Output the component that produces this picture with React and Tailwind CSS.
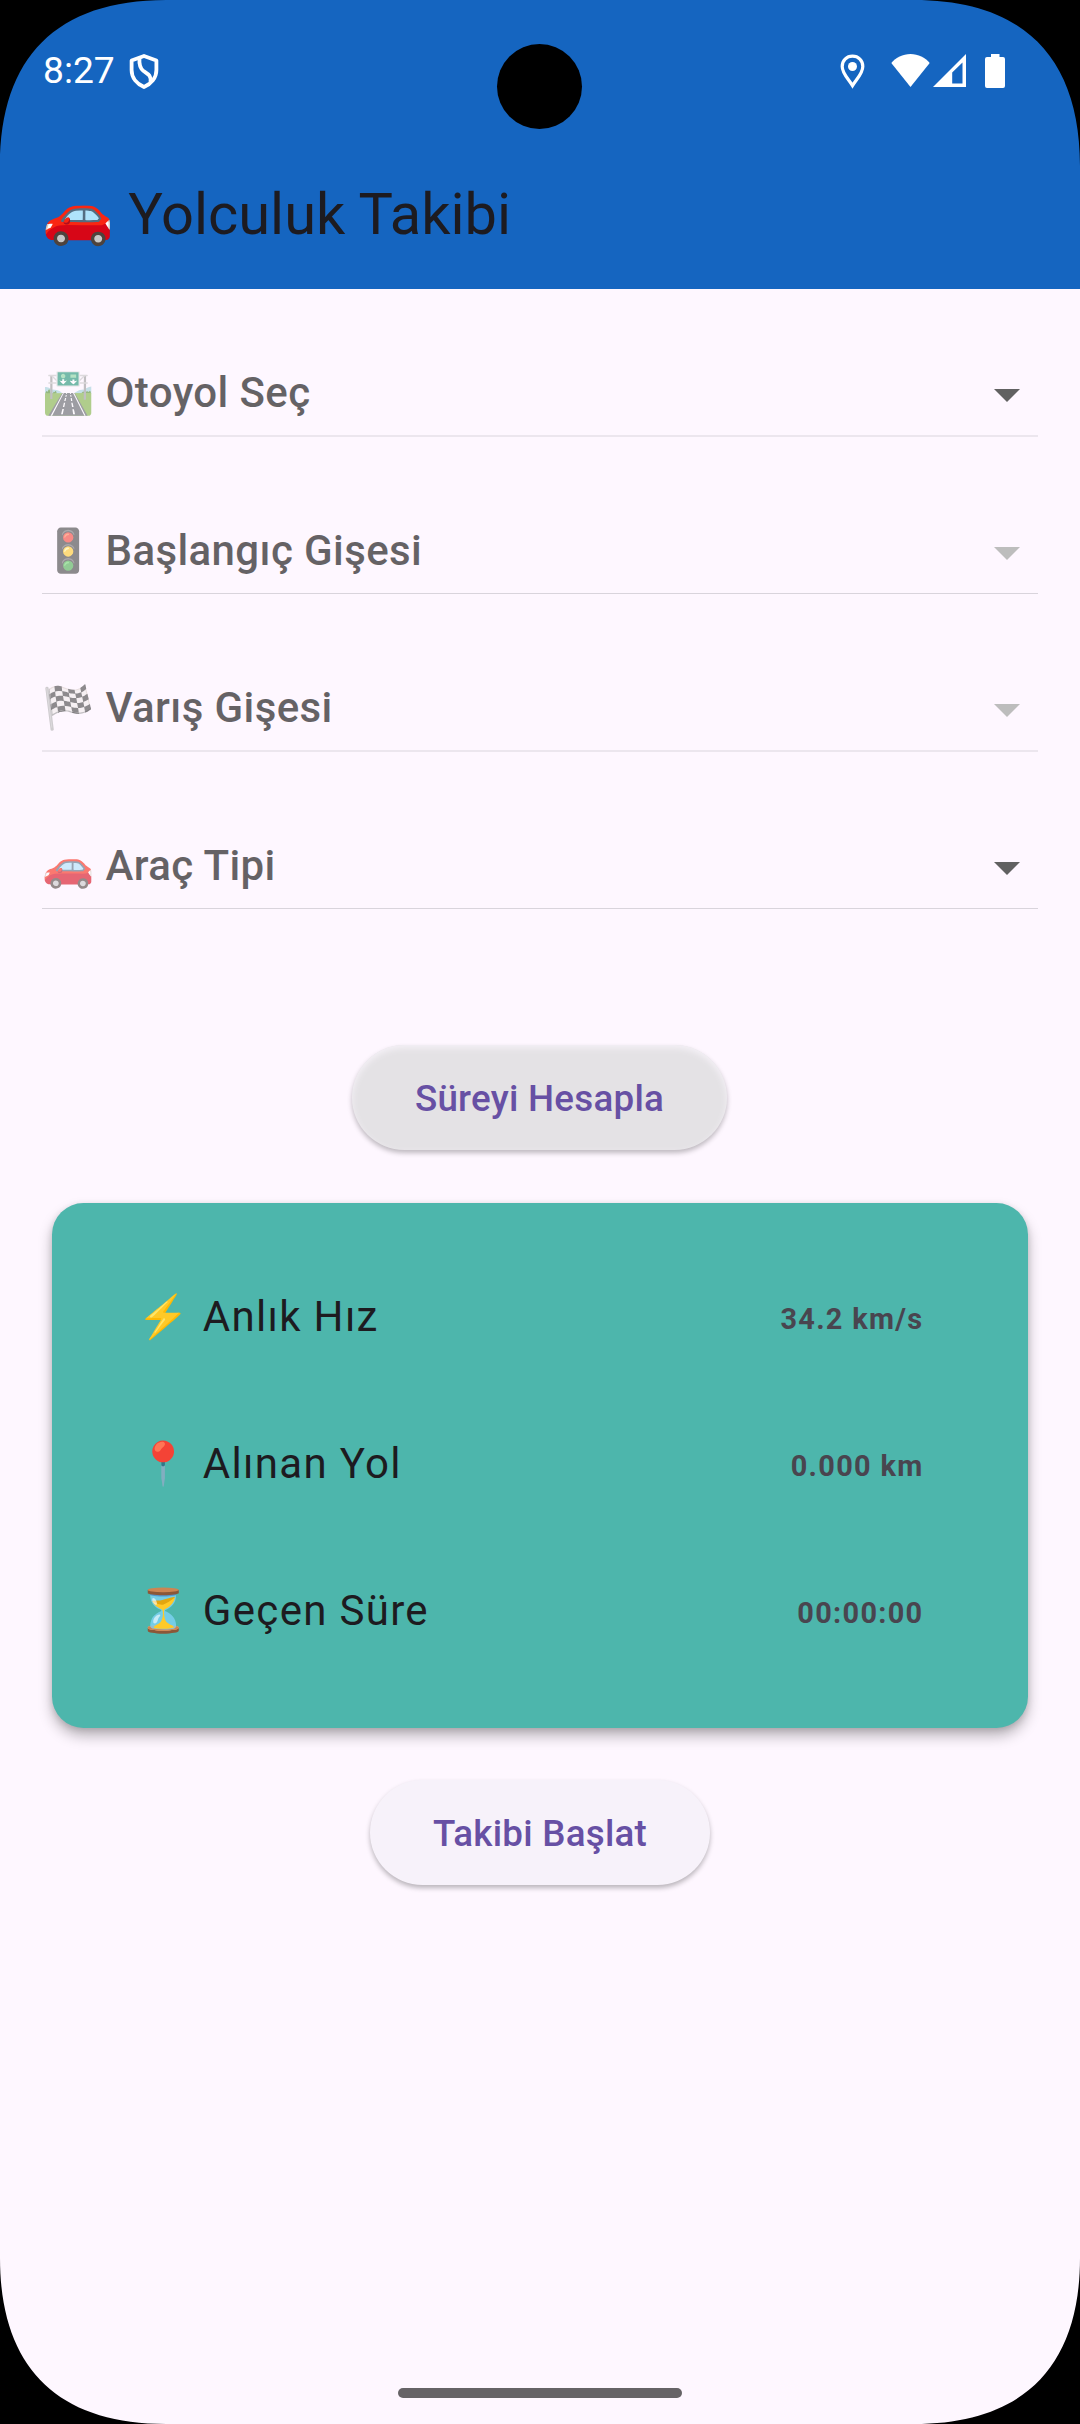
const selects = [
  { icon: "🛣️", label: "Otoyol Seç", enabled: true, line: "-mt-px h-[2px] bg-[#ece6ee]" },
  { icon: "🚦", label: "Başlangıç Gişesi", enabled: false, line: "h-px bg-[#d9d4dc]" },
  { icon: "🏁", label: "Varış Gişesi", enabled: false, line: "-mt-px h-[2px] bg-[#ece6ee]" },
  { icon: "🚗", label: "Araç Tipi", enabled: true, line: "h-px bg-[#d9d4dc]" },
];

const stats = [
  { icon: "⚡", label: "Anlık Hız", value: "34.2 km/s" },
  { icon: "📍", label: "Alınan Yol", value: "0.000 km" },
  { icon: "⏳", label: "Geçen Süre", value: "00:00:00" },
];

function Corner({ className }) {
  return (
    <svg className={`absolute h-[166px] w-[166px] ${className}`} viewBox="0 0 166 166">
      <path d="M0 0V166C0 57 57 0 166 0Z" fill="#000" />
    </svg>
  );
}

function StatusBar() {
  return (
    <div className="flex h-[142px] items-start text-white">
      <span className="ml-[43px] mt-[49px] w-[86px] text-[37.2px] leading-[43px]">8:27</span>
      <svg className="mt-[54px] h-[35px] w-[30px]" viewBox="0 0 30 35" fill="none" stroke="#fff" strokeLinejoin="round">
        <path d="M15 2 27.400 6.500V16C27.400 24 22 30 15 33 8 30 2.600 24 2.600 16V6.500Z" strokeWidth="3.8" />
        <path d="M10.500 4C10 10 10.500 14 14.500 17 19 20 22.500 21.500 21.500 28" strokeWidth="3.8" />
      </svg>
      <svg className="ml-[681px] mt-[54px] h-[35px] w-[25px]" viewBox="0 0 25 35">
        <path d="M12.500 2.200C6.500 2.200 2.200 6.600 2.200 12.400 2.200 19.400 8.500 25 12.500 31.600 16.500 25 22.800 19.400 22.800 12.400 22.800 6.600 18.500 2.200 12.500 2.200Z" fill="none" stroke="#fff" strokeWidth="3.2" />
        <circle cx="12.500" cy="12.500" r="4.500" fill="#fff" />
      </svg>
      <svg className="ml-[26px] mt-[54px] h-[33px] w-[39px]" viewBox="0 0 40 33" preserveAspectRatio="none" fill="#fff">
        <path d="M20 33 .3 9C5 3.500 12 0 20 0s15 3.500 19.700 9Z" />
      </svg>
      <svg className="ml-[3px] mt-[54px] h-[33px] w-[33px]" viewBox="0 0 33 33" fill="#fff">
        <path fillRule="evenodd" d="M33 0V33H0ZM29.500 8.500 19.200 18.500V29.500H29.500Z" />
      </svg>
      <svg className="ml-[19px] mt-[54px] h-[34px] w-[20px]" viewBox="0 0 20 34" fill="#fff">
        <path d="M6 0h8.500V3H18a2 2 0 0 1 2 2V32a2 2 0 0 1-2 2H2a2 2 0 0 1-2-2V5A2 2 0 0 1 2 3H6Z" />
      </svg>
    </div>
  );
}

function SelectRow({ icon, label, enabled, line }) {
  return (
    <div className="flex h-[157.5px] flex-col justify-end">
      <div className="flex h-[83px] items-center justify-between">
        <span className="whitespace-pre pb-[3px] text-[42px] font-medium leading-[63px] tracking-[0.39px] text-black opacity-60">
          {icon} {label}
        </span>
        <svg className={`mr-[18px] mt-[3px] h-[13px] w-[26px] ${enabled ? "text-[#616161]" : "text-[#bdbdbd]"}`} viewBox="0 0 26 13" fill="currentColor">
          <path d="M0 0H26L13 13Z" />
        </svg>
      </div>
      <div className={line} />
    </div>
  );
}

export default function App() {
  return (
    <div className="relative flex h-[2424px] w-[1080px] flex-col overflow-hidden bg-[#fef7ff] font-[Roboto,'Noto_Color_Emoji',sans-serif]">
      <header className="h-[289px] bg-[#1565c0]">
        <StatusBar />
        <h1 className="ml-[42px] whitespace-pre text-[57.75px] leading-[145px] text-[#1d1b20]">🚗 Yolculuk Takibi</h1>
      </header>

      <main className="flex flex-col items-center">
        <div className="-mt-[10px] w-[996px]">
          {selects.map((s) => (
            <SelectRow key={s.label} {...s} />
          ))}
        </div>

        <button className="mt-[136px] mr-px h-[105px] w-[375px] rounded-full bg-[#e4e2e5] pt-[2px] text-[36.75px] font-medium tracking-[0.26px] text-[#6750a4] shadow-[0_3px_5px_rgba(0,0,0,0.25),inset_0_3px_6px_#f5f1f7]">
          Süreyi Hesapla
        </button>

        <section className="mt-[52.5px] h-[525px] w-[976px] rounded-[31.5px] bg-[#4db6ac] pt-[42px] pl-[85.5px] pr-[104.5px] shadow-[0_8px_14px_rgba(0,0,0,0.27),0_2px_6px_rgba(0,0,0,0.12)]">
          {stats.map((s) => (
            <div key={s.label} className="flex h-[147px] items-center justify-between">
              <span className="whitespace-pre pb-[4px] text-[42px] leading-[63px] tracking-[1.31px] text-[#1d1b20]">
                {s.icon} {s.label}
              </span>
              <span className="pt-px text-[28.9px] font-bold leading-[42px] tracking-[1.31px] text-[#49454f]">{s.value}</span>
            </div>
          ))}
        </section>

        <button className="mt-[52.5px] h-[105px] w-[340px] rounded-full bg-[#f7f2fa] pt-[2px] text-[36.75px] font-medium tracking-[0.26px] text-[#6750a4] shadow-[0_3px_5px_rgba(0,0,0,0.27)]">
          Takibi Başlat
        </button>
      </main>

      <div className="mx-auto mt-auto mb-[26px] h-[10px] w-[284px] rounded-full bg-[#666366]" />

      <div className="absolute left-[497px] top-[44px] h-[85px] w-[85px] rounded-full bg-black" />
      <Corner className="left-0 top-0" />
      <Corner className="right-0 top-0 -scale-x-100" />
      <Corner className="bottom-0 left-0 -scale-y-100" />
      <Corner className="right-0 bottom-0 rotate-180" />
    </div>
  );
}
